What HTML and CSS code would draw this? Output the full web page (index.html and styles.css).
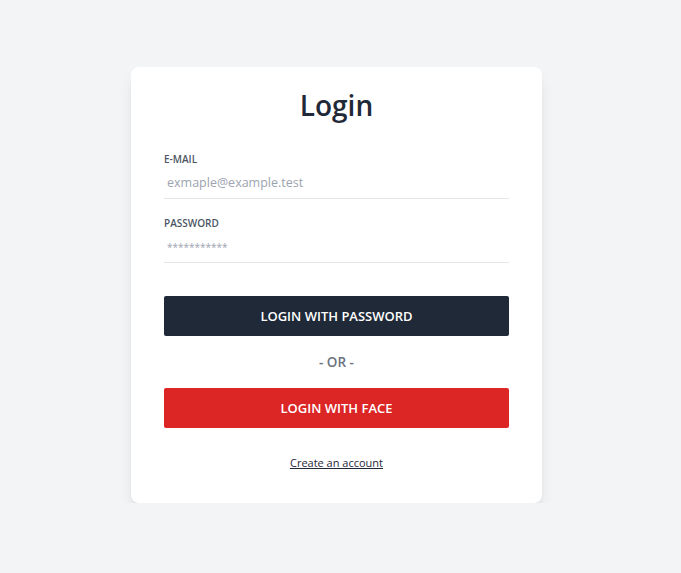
FILE: index.html
```html
<!DOCTYPE html>
<html lang="en">
<head>
<meta charset="utf-8">
<title>Login</title>
<link rel="stylesheet" href="styles.css">
</head>
<body>
<div class="page">
  <div class="card">
    <h1 class="title">Login</h1>
    <form class="form">
      <div class="field">
        <label class="label" for="email">E-MAIL</label>
        <input class="input" id="email" type="email" placeholder="exmaple@example.test">
      </div>
      <div class="field field-second">
        <label class="label" for="password">PASSWORD</label>
        <input class="input input-pass" id="password" type="text" placeholder="***********">
      </div>
      <button type="button" class="btn btn-dark">LOGIN WITH PASSWORD</button>
      <div class="or">- OR -</div>
      <button type="button" class="btn btn-red">LOGIN WITH FACE</button>
      <div class="footer"><a class="link" href="#">Create an account</a></div>
    </form>
  </div>
</div>
</body>
</html>
```

FILE: styles.css
```css
* { box-sizing: border-box; }
html, body { margin: 0; padding: 0; }
body {
  background: #f3f4f6;
  font-family: "Open Sans", "Noto Sans", sans-serif;
  color: #1f2937;
}
.page {
  display: flex;
  justify-content: center;
  padding: 67px 8px 0 0;
}
.card {
  width: 411px;
  background: #ffffff;
  border-radius: 8px;
  box-shadow: 0 10px 15px -3px rgba(0,0,0,0.1), 0 4px 6px -4px rgba(0,0,0,0.1);
  padding: 20px 33px 30px;
}
.title {
  margin: 0;
  text-align: center;
  font-size: 28px;
  line-height: 36px;
  font-weight: 600;
  color: #1f2937;
}
.form {
  display: flex;
  flex-direction: column;
  margin-top: 28px;
}
.field { display: flex; flex-direction: column; }
.field-second { margin-top: 16px; }
.label {
  font-size: 10px;
  line-height: 16px;
  font-weight: 600;
  color: #4b5563;
}
.input {
  border: 0;
  border-bottom: 1px solid #e5e7eb;
  padding: 5px 3px 6px;
  font-family: inherit;
  font-size: 12.5px;
  line-height: 20px;
  height: 32px;
  color: #1f2937;
  outline: none;
  background: transparent;
}
.input::placeholder { color: #9ca3af; }
.input-pass::placeholder { font-size: 10px; }
.btn {
  border: 0;
  border-radius: 2px;
  height: 40px;
  font-family: inherit;
  font-size: 13px;
  font-weight: 600;
  color: #ffffff;
  cursor: pointer;
}
.btn-dark { background: #1f2937; margin-top: 33px; }
.btn-red { background: #dc2626; }
.or {
  margin: 16px 0;
  text-align: center;
  font-size: 13.5px;
  line-height: 20px;
  font-weight: 600;
  color: #6b7280;
}
.footer {
  margin-top: 25px;
  text-align: center;
  font-size: 11px;
  line-height: 20px;
}
.link { color: #1f2937; text-decoration: underline; }
```
